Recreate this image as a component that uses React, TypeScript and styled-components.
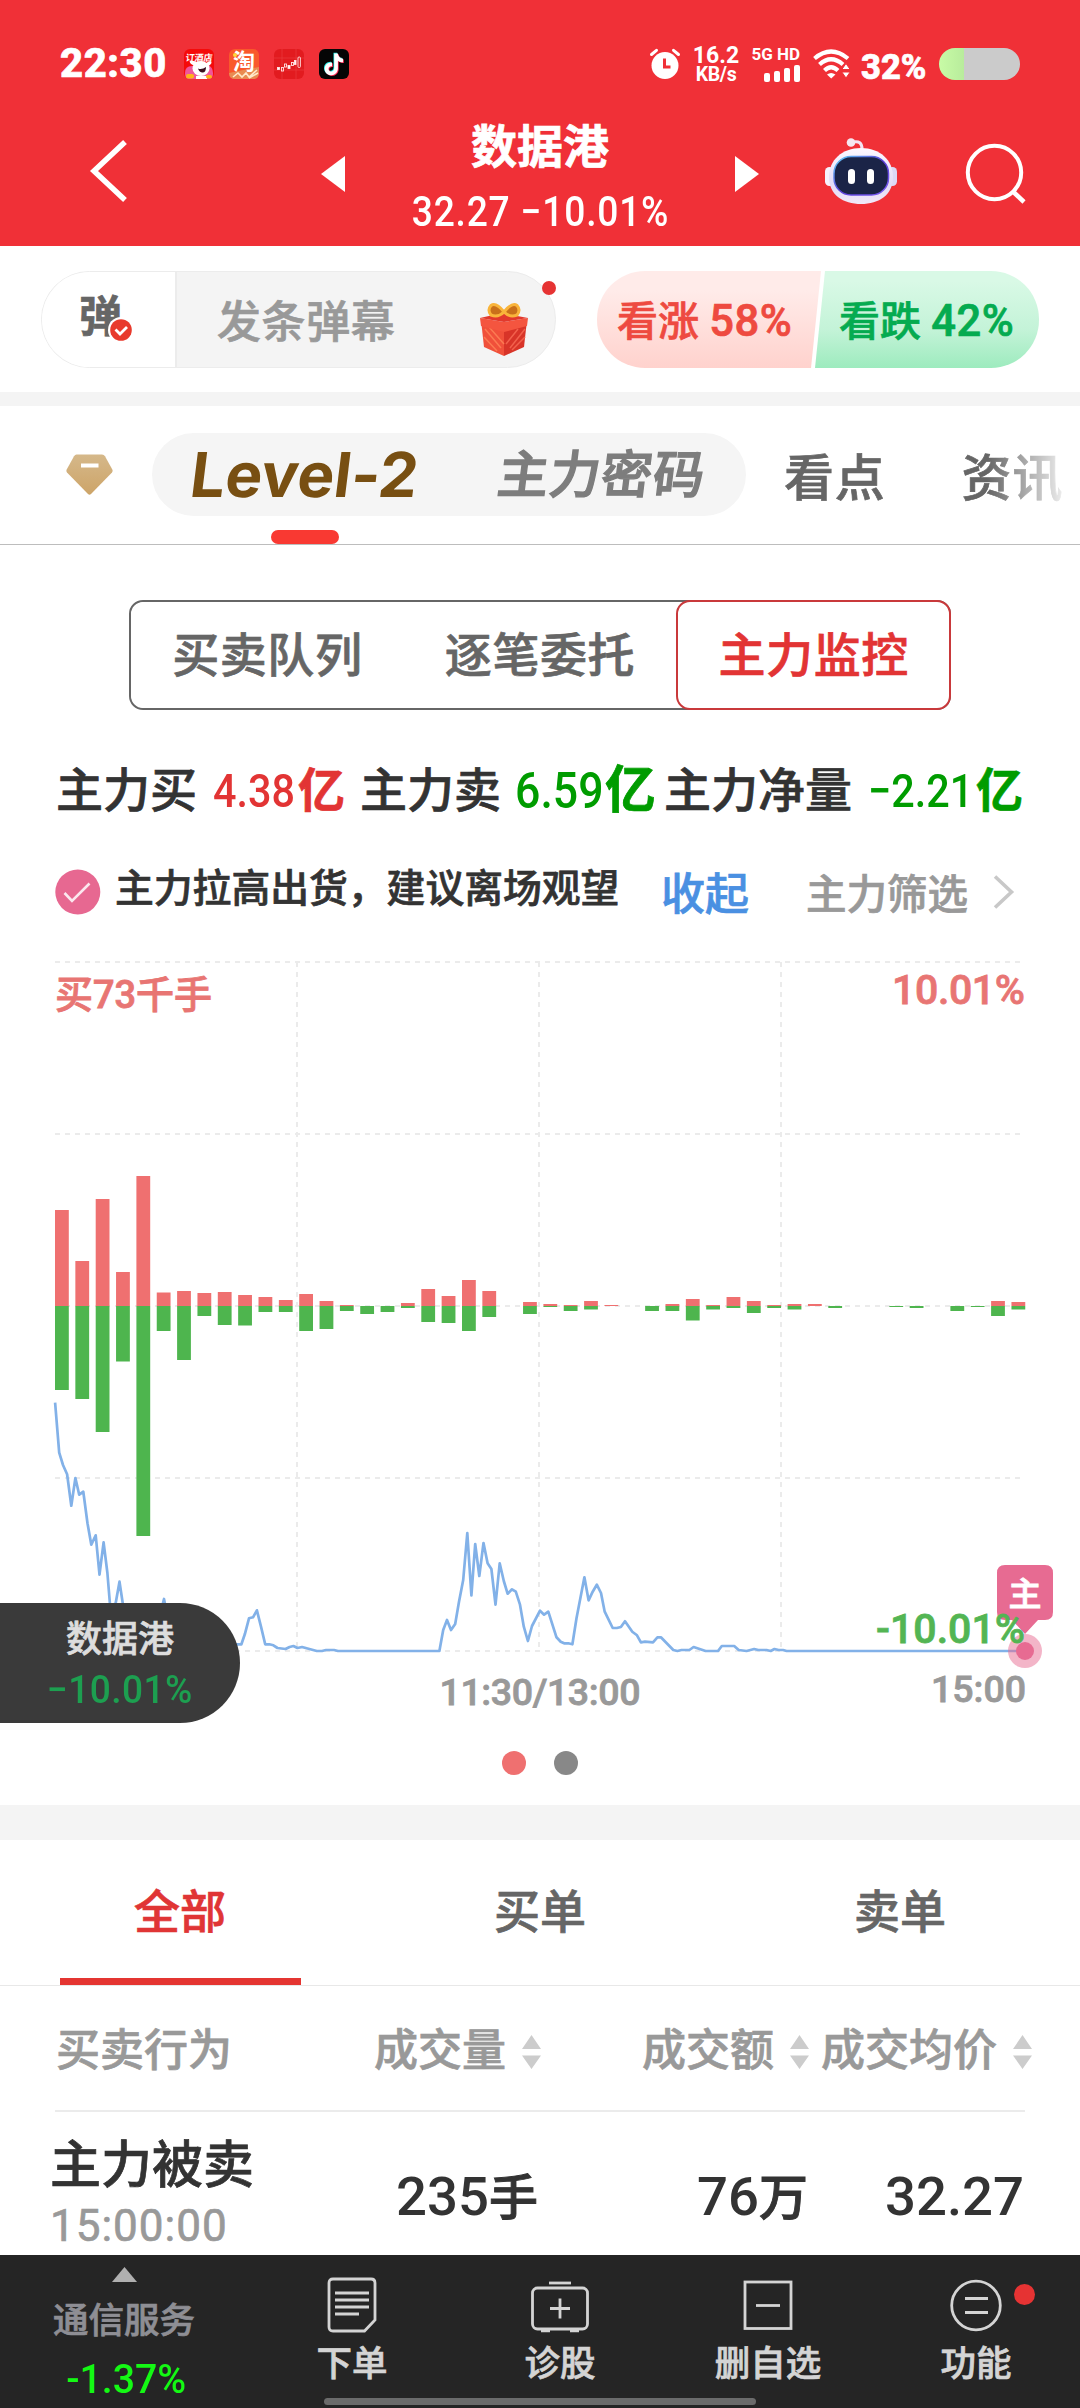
import React from "react";
import styled, { createGlobalStyle } from "styled-components";

const RED = "#f03037";
const INK = "#333333";

const GlobalStyle = createGlobalStyle`
  * { box-sizing: border-box; }
  html, body { margin: 0; padding: 0; background: #fff; }
  body {
    width: 1080px;
    font-family: Roboto, "Noto Sans CJK SC", sans-serif;
    font-weight: 500;
    color: ${INK};
    -webkit-text-stroke: 0.7px currentColor;
  }
  svg { display: block; flex: none; overflow: visible; }
  svg text { -webkit-text-stroke: 0; }
`;

const Page = styled.div`
  position: relative;
  width: 1080px;
  height: 2408px;
  overflow: hidden;
  background: #fff;
  display: flex;
  flex-direction: column;
`;

/* ---------- top bar ---------- */

const TopBar = styled.header`
  flex: none;
  height: 246px;
  background: ${RED};
  color: #fff;
`;

const StatusBar = styled.div`
  height: 96px;
  padding: 32px 60px 0 60px;
  display: flex;
  align-items: center;
`;

const Clock = styled.span`
  width: 124px;
  font-size: 40px;
  line-height: 64px;
  font-weight: 800;
  letter-spacing: 0.6px;
`;

const AppIcons = styled.div`
  display: flex;
  gap: 15px;
`;

const StatusRight = styled.div`
  flex: 1;
  display: flex;
  align-items: center;
  justify-content: flex-end;
`;

const NetSpeed = styled.div`
  width: 50px;
  margin-left: 11px;
  display: flex;
  flex-direction: column;
  align-items: center;
  font-weight: 700;
  -webkit-text-stroke: 0;
`;

const SpeedValue = styled.span`
  font-size: 23px;
  line-height: 21px;
`;

const SpeedUnit = styled.span`
  font-size: 19.5px;
  line-height: 18px;
  letter-spacing: -0.4px;
`;

const Signal = styled.div`
  width: 50px;
  margin-left: 9px;
  display: flex;
  flex-direction: column;
  align-items: flex-end;
  -webkit-text-stroke: 0;
`;

const SignalLabel = styled.span`
  font-size: 17px;
  line-height: 14px;
  font-weight: 700;
  white-space: nowrap;
`;

const SignalBars = styled.div`
  display: flex;
  align-items: flex-end;
  gap: 4px;
  height: 17px;
  margin-top: 4px;
`;

const SignalBar = styled.i<{ $h: number }>`
  width: 6px;
  height: ${(p) => p.$h}px;
  border-radius: 2px;
  background: #fff;
`;

const BatteryText = styled.span`
  width: 78px;
  margin-left: 11px;
  font-size: 34.5px;
  line-height: 40px;
  padding-top: 5px;
  font-weight: 800;
`;

const Battery = styled.div`
  width: 81px;
  height: 32px;
  border-radius: 16px;
  background: linear-gradient(90deg, #c8fba6 0, #b8ec9c 25px, #cbcbcb 25px);
`;

const NavRow = styled.div`
  height: 150px;
  padding-left: 90px;
  display: flex;
  align-items: center;
`;

const Push = styled.div<{ $left: number; $top?: number }>`
  margin-left: ${(p) => p.$left}px;
  padding-top: ${(p) => p.$top ?? 0}px;
`;

const TitleBlock = styled.div`
  width: 390px;
  height: 150px;
  padding-top: 24px;
  display: flex;
  flex-direction: column;
  align-items: center;
`;

const StockName = styled.h1`
  margin: 0;
  font-size: 46px;
  line-height: 54px;
  font-weight: 700;
`;

const StockPrice = styled.div`
  margin-top: 11px;
  font-size: 42px;
  line-height: 54px;
  white-space: pre;
  transform: scaleX(0.885);
  letter-spacing: 0.9px;
  -webkit-text-stroke: 0;
`;

/* ---------- comments / votes ---------- */

const DanmuRow = styled.div`
  flex: none;
  height: 146px;
  padding: 25px 41px 0;
  display: flex;
  justify-content: space-between;
`;

const DanmuPill = styled.div`
  position: relative;
  width: 515px;
  height: 97px;
  border: 1px solid #ececec;
  border-radius: 49px;
  display: flex;
  background: #f4f4f4;
`;

const DanmuToggle = styled.div`
  position: relative;
  width: 135px;
  border-right: 2px solid #ececec;
  border-radius: 48px 0 0 48px;
  background: #fff;
  padding-left: 37px;
  font-size: 43px;
  line-height: 90px;
  font-weight: 700;
  color: #666;
`;

const ToggleBadge = styled.div`
  position: absolute;
  left: 66px;
  top: 45px;
`;

const DanmuInput = styled.div`
  flex: 1;
  padding-left: 40px;
  font-size: 44px;
  line-height: 102px;
  letter-spacing: 0.6px;
  color: #999;
`;

const GiftSlot = styled.div`
  padding: 30px 27px 0 0;
`;

const RedDot = styled.i<{ $size: number; $left: number; $top: number }>`
  position: absolute;
  left: ${(p) => p.$left}px;
  top: ${(p) => p.$top}px;
  width: ${(p) => p.$size}px;
  height: ${(p) => p.$size}px;
  border-radius: 50%;
  background: #e63333;
`;

const Votes = styled.div`
  display: flex;
  width: 442px;
`;

const Vote = styled.div<{ $up?: boolean }>`
  flex: none;
  width: 224px;
  height: 97px;
  margin-left: ${(p) => (p.$up ? 0 : -6)}px;
  padding-left: ${(p) => (p.$up ? 20 : 24)}px;
  border-radius: ${(p) => (p.$up ? "48px 0 0 48px" : "0 48px 48px 0")};
  background: ${(p) =>
    p.$up
      ? "linear-gradient(180deg,#ffebe9 20%,#ffd2cd)"
      : "linear-gradient(180deg,#d9f9e6 10%,#c4f3d8 60%,#9debbe)"};
  color: ${(p) => (p.$up ? "#ee4a40" : "#05ab50")};
  clip-path: ${(p) =>
    p.$up
      ? "polygon(0 0,100% 0,calc(100% - 10px) 100%,0 100%)"
      : "polygon(10px 0,100% 0,100% 100%,0 100%)"};
  font-size: 41px;
  line-height: 101px;
  white-space: nowrap;
  & > span {
    font-size: 43.5px;
    letter-spacing: 0.6px;
  }
`;

const Band = styled.div<{ $h: number }>`
  flex: none;
  height: ${(p) => p.$h}px;
  background: #f4f4f4;
`;

/* ---------- main tabs ---------- */

const MainTabs = styled.nav`
  position: relative;
  flex: none;
  height: 139px;
  border-bottom: 1px solid #bdbdbd;
  display: flex;
  padding-top: 27px;
`;

const DiamondSlot = styled.div`
  width: 152px;
  padding: 21px 0 0 66px;
`;

const TabPill = styled.div`
  width: 594px;
  height: 83px;
  border-radius: 42px;
  background: #f5f5f5;
  display: flex;
`;

const LevelTab = styled.span`
  width: 346px;
  padding-left: 39px;
  font-family: Inter, Roboto, sans-serif;
  font-size: 62px;
  line-height: 83px;
  font-weight: 700;
  letter-spacing: 0;
  color: #784f12;
  transform: skewX(-7deg);
  -webkit-text-stroke: 0;
`;

const SecretTab = styled.span`
  font-size: 51px;
  line-height: 85px;
  letter-spacing: 0.8px;
  color: #7d7d7d;
  transform: skewX(-7deg);
  -webkit-text-stroke: 1.4px currentColor;
`;

const PlainTab = styled.span<{ $left: number; $fade?: boolean }>`
  margin-left: ${(p) => p.$left}px;
  font-size: 50px;
  line-height: 92px;
  color: #666;
  letter-spacing: 0.8px;
  white-space: nowrap;
  ${(p) =>
    p.$fade &&
    "mask-image: linear-gradient(90deg,#000 25%,rgba(0,0,0,.12) 100%);"}
`;

const TabMark = styled.i`
  position: absolute;
  left: 271px;
  bottom: 0;
  width: 68px;
  height: 14px;
  border-radius: 7px;
  background: #f93932;
`;

/* ---------- segmented control ---------- */

const Segments = styled.div`
  flex: none;
  margin: 55px 129px 0 129px;
  height: 110px;
  border: 2px solid #666;
  border-radius: 14px;
  display: grid;
  grid-template-columns: 1fr 1fr 1fr;
  grid-template-rows: 106px;
`;

const Segment = styled.div<{ $on?: boolean }>`
  margin: ${(p) => (p.$on ? "-2px -2px -2px 0" : "0")};
  border: ${(p) => (p.$on ? "2px solid #c9393b" : "0")};
  border-radius: 14px;
  background: #fff;
  text-align: center;
  font-size: 47px;
  line-height: 108px;
  letter-spacing: 0.6px;
  color: ${(p) => (p.$on ? "#e23434" : "#666")};
`;

/* ---------- totals ---------- */

const Totals = styled.div`
  flex: none;
  height: 64px;
  margin-top: 47px;
  padding-left: 56px;
  display: grid;
  grid-template-columns: 304px 304px 360px;
`;

const Total = styled.div<{ $color: string }>`
  display: flex;
  font-size: 47px;
  line-height: 68px;
  white-space: nowrap;
  & > b {
    font-weight: 500;
    color: ${(p) => p.$color};
  }
`;

const TotalLabel = styled.span<{ $w: number }>`
  width: ${(p) => p.$w}px;
`;

const TotalValue = styled.b<{ $w: number; $grow?: number }>`
  width: ${(p) => p.$w}px;
  font-size: ${(p) => 47 * (p.$grow ?? 1)}px;
  transform: scaleX(0.88);
  transform-origin: left;
  -webkit-text-stroke: 0;
`;

const TotalUnit = styled.b<{ $grow?: number }>`
  && { font-weight: 700; }
  font-size: ${(p) => 47 * (p.$grow ?? 1)}px;
`;

/* ---------- hint ---------- */

const Hint = styled.div`
  flex: none;
  height: 60px;
  margin-top: 41px;
  padding-left: 55px;
  display: flex;
  align-items: center;
  white-space: nowrap;
`;

const HintText = styled.span`
  width: 560px;
  padding-left: 14px;
  font-size: 38.8px;
  line-height: 60px;
  margin-top: -6px;
`;

const Collapse = styled.span`
  width: 145px;
  font-size: 44px;
  line-height: 64px;
  padding-top: 6px;
  color: #4a90e2;
`;

const FilterLink = styled.span`
  width: 187px;
  font-size: 40.5px;
  line-height: 64px;
  padding-top: 5px;
  color: #999;
`;

/* ---------- chart ---------- */

const ChartBox = styled.div`
  flex: none;
  height: 790px;
  margin-top: 28px;
`;

const ChartLabel = styled.text<{ $size: number; $color: string }>`
  font-size: ${(p) => p.$size}px;
  fill: ${(p) => p.$color};
  stroke: ${(p) => p.$color};
  stroke-width: 0.8px;
  font-weight: 500;
`;

const Pager = styled.div`
  flex: none;
  height: 65px;
  display: flex;
  justify-content: center;
  gap: 28px;
  padding: 11px 0 0 0;
`;

const PagerDot = styled.i<{ $color: string }>`
  width: 24px;
  height: 24px;
  border-radius: 50%;
  background: ${(p) => p.$color};
`;

const FloatQuote = styled.aside`
  position: absolute;
  left: 0;
  top: 1603px;
  width: 240px;
  height: 120px;
  padding: 12px 0 0 0;
  border-radius: 0 60px 60px 0;
  background: #3a3a3a;
  display: flex;
  flex-direction: column;
  align-items: center;
`;

const FloatName = styled.span`
  font-size: 36px;
  line-height: 50px;
  color: #ddd;
`;

const FloatChange = styled.span`
  font-size: 39px;
  line-height: 50px;
  color: #1d9f50;
  transform: scaleX(0.95);
  letter-spacing: 0.5px;
  -webkit-text-stroke: 0;
`;

/* ---------- orders ---------- */

const OrderTabs = styled.div`
  flex: none;
  height: 146px;
  border-bottom: 1px solid #e8e8e8;
  display: grid;
  grid-template-columns: repeat(3, 360px);
`;

const OrderTab = styled.div<{ $on?: boolean }>`
  display: flex;
  flex-direction: column;
  align-items: center;
  font-size: 46px;
  line-height: 145px;
  height: 145px;
  color: ${(p) => (p.$on ? "#e03535" : "#666")};
  &::after {
    content: "";
    flex: none;
    width: 241px;
    height: 7px;
    margin-top: -7px;
    background: ${(p) => (p.$on ? "#e43531" : "transparent")};
  }
`;

const gridCols = "286px 200px 268px 223px";

const HeadRow = styled.div`
  flex: none;
  height: 126px;
  margin: 0 55px;
  border-bottom: 2px solid #ebebeb;
  display: grid;
  grid-template-columns: ${gridCols};
  font-size: 44px;
  line-height: 131px;
  color: #999;
  white-space: nowrap;
`;

const HeadCell = styled.div<{ $first?: boolean }>`
  display: flex;
  align-items: center;
  justify-content: ${(p) => (p.$first ? "flex-start" : "flex-end")};
  gap: 16px;
  padding-left: ${(p) => (p.$first ? 1 : 0)}px;
`;

const DataRow = styled.div`
  flex: none;
  height: 142px;
  padding-left: 50px;
  display: grid;
  grid-template-columns: 291px 197px 270px 216px;
`;

const Action = styled.div`
  display: flex;
  flex-direction: column;
  padding-top: 22px;
`;

const ActionName = styled.span`
  font-size: 51px;
  line-height: 64px;
`;

const ActionTime = styled.span`
  font-size: 44px;
  line-height: 56px;
  font-weight: 400;
  letter-spacing: 1px;
  color: #999;
`;

const Cell = styled.div`
  text-align: right;
  font-size: 54.5px;
  line-height: 168px;
  -webkit-text-stroke: 0;
  & > span {
    font-size: 49px;
    -webkit-text-stroke: 0.9px currentColor;
  }
`;

/* ---------- bottom bar ---------- */

const BottomBar = styled.footer`
  position: absolute;
  left: 0;
  bottom: 0;
  width: 1080px;
  height: 153px;
  background: #252525;
  display: grid;
  grid-template-columns: 248px repeat(4, 208px);
  color: #d4d4d4;
`;

const Sector = styled.div`
  display: flex;
  flex-direction: column;
  align-items: center;
  padding-top: 12px;
`;

const SectorName = styled.span`
  margin-top: 13px;
  font-size: 35.5px;
  line-height: 52px;
  color: #8e8e94;
`;

const SectorChange = styled.span`
  margin: 7px 0 0 4px;
  font-size: 40px;
  line-height: 52px;
  color: #14f814;
  transform: scaleX(0.98);
  -webkit-text-stroke: 0;
`;

const NavAction = styled.div`
  position: relative;
  display: flex;
  flex-direction: column;
  align-items: center;
  padding-top: 21px;
`;

const ActionLabel = styled.span`
  margin-top: 6px;
  font-size: 35.5px;
  line-height: 52px;
`;

const HomeBar = styled.i`
  position: absolute;
  left: 324px;
  bottom: 3px;
  width: 432px;
  height: 7px;
  border-radius: 4px;
  background: #6b6b6b;
`;

/* ---------- data ---------- */

const bars: [number, number][] = [
  [96, 84], [45, 93], [107, 126], [34, 55.5], [130, 230], [13.5, 25], [15, 54],
  [13, 10], [14, 19], [11, 19.5], [9, 6], [6, 6], [12, 25], [5, 23], [1, 5],
  [0, 8], [0, 6], [3, 2], [17, 16], [10, 17], [26, 25], [15, 11], [0, 0],
  [4, 8], [2, 1], [1, 5], [5, 3.5], [1, 0], [0, 0], [0, 5], [2, 5], [7, 14.5],
  [1, 3.5], [9, 2], [5, 7], [1, 2], [2, 3.5], [2, 0], [0, 2], [0, 0], [0, 0],
  [0, 1], [0, 2], [0, 0], [0, 5], [0, 1], [5, 10], [4, 3.5],
];

const trend =
  "55.1,1402.7 59.2,1452.7 63,1465 67.1,1474.3 71.3,1505.7 75.4,1478 79.2,1494.7 83.3,1491.7 87.5,1523.3 91.3,1544.7 95.7,1535.3 99.5,1574.7 103.6,1542.3 107.4,1573 110.2,1607 115.7,1603 119.5,1581.7 123.3,1607 131,1640 155,1640 160,1615 164,1599 168,1620 174,1644 237.6,1644.3 241.4,1644.3 244.8,1634.3 249,1618.3 253,1617.3 256.9,1610.3 261,1626.7 265.2,1644.3 269.3,1644.3 273.4,1645.3 277.5,1648 285.5,1649 289.6,1647 293.4,1646 297.5,1648 302,1647 316.8,1651 322,1651 326,1650 334,1650 338,1651 439.4,1651 443.2,1630 447,1620 451,1630 455.2,1624 459,1601.7 463.2,1580 467.3,1533 471.4,1595.3 475.2,1544 479.3,1576 483.5,1543 487.6,1563.3 491.4,1569 495.5,1604.7 499.7,1563.3 503.8,1581 507.6,1593.7 512,1589.3 515.8,1591.7 520,1604.7 523.8,1626.7 527.9,1641 532,1626 540,1610.7 544.1,1614.7 548.3,1611.7 556.5,1637.3 560.7,1641.7 564.1,1643.3 568.2,1643.3 572.4,1644.3 576.5,1618.3 584.4,1577.3 588.6,1600.3 592.7,1591.7 596.8,1584.7 601,1593 604.7,1611.7 612.7,1628 616.8,1628 620.9,1627 625,1621.3 632.3,1631.7 637,1635.3 640.9,1642.3 645,1641.7 653,1642.3 657.4,1637.3 660.9,1637.3 673.3,1650 677.4,1651 681.5,1650 689.4,1650 693.6,1647 705.6,1651 718,1651 721.8,1646 734.2,1646 738.7,1650 746.6,1651 754.2,1649 758.3,1650 766.6,1650 770.7,1651 774.5,1649 778.6,1650 783,1650 786.6,1651 1024.8,1651";

/* ---------- drawings ---------- */

const HotelIcon = () => (
  <svg width="30" height="30" viewBox="0 0 30 30">
    <rect width="30" height="30" rx="6" fill="#f50a0a" />
    <path d="M1 24 Q1 17 8 17 L22 14 Q29 18 29 24 V25 Q29 30 24 30 H6 Q1 30 1 25Z" fill="#f0569a" />
    <text x="15" y="12.5" fontSize="9" fontWeight="700" fill="#fff" textAnchor="middle" transform="skewX(-6) translate(1 0)">订酒店</text>
    <ellipse cx="17" cy="19.5" rx="8.5" ry="7.5" fill="#fff" />
    <ellipse cx="11" cy="14.5" rx="5.5" ry="2.2" fill="#fff" transform="rotate(20 11 14.5)" />
    <ellipse cx="24" cy="15" rx="4" ry="1.8" fill="#fff" transform="rotate(-35 24 15)" />
    <path d="M14 19.5 Q18 21 22 18 Q22 24 18 23.5 Q15 23 14 19.5Z" fill="#3a1020" />
    <path d="M12 27 h11 v3 h-11z" fill="#fff" />
    <rect x="2" y="25" width="8" height="4.5" rx="2" fill="#ffb31a" />
    <rect x="22" y="26" width="6" height="3.5" rx="1.7" fill="#ffb31a" />
  </svg>
);

const TaoIcon = () => (
  <svg width="30" height="30" viewBox="0 0 30 30">
    <rect width="30" height="30" rx="6" fill="#f9592b" />
    <path d="M0 24 Q14 21 30 18 V24 Q30 30 24 30 H6 Q0 30 0 24Z" fill="#e98b52" />
    <path d="M4 28 l5 -4 l4 4 l4 -4 l3 4 l8 -7 M20 29 l9 -5" stroke="#ffe9c9" strokeWidth="1.6" fill="none" />
    <text x="15" y="20" fontSize="22" fontWeight="700" fill="#fff" textAnchor="middle">淘</text>
    <circle cx="6" cy="6" r="2" fill="#ffd93b" />
  </svg>
);

const StockIcon = () => (
  <svg width="30" height="30" viewBox="0 0 30 30">
    <rect width="30" height="30" rx="6" fill="#e21b1f" />
    <path d="M8 0V30 M22 0V30 M0 9H30 M0 21H30" stroke="#ea3a3c" strokeWidth="0.7" />
    <g fill="none" stroke="#ffe3e3" strokeWidth="0.9">
      <rect x="3.5" y="18.5" width="2" height="2" fill="#fff" />
      <rect x="7.5" y="18.5" width="2" height="3.5" />
      <rect x="10.5" y="15" width="2" height="3" />
      <rect x="14" y="16.5" width="2" height="3" fill="#fff" />
      <rect x="17.5" y="13.5" width="2" height="3" />
      <rect x="20.5" y="11.5" width="1.5" height="4" fill="#fff" />
      <rect x="24" y="8" width="2.4" height="10.5" rx="1" />
    </g>
  </svg>
);

const TiktokIcon = () => {
  const note =
    "M15.2 4.5h3.6c.4 3 2.2 4.9 5.2 5.2v3.6c-2 0-3.7-.6-5.1-1.6v7.6c0 4-2.9 6.9-6.7 6.9-3.7 0-6.5-2.8-6.5-6.3 0-3.8 3.2-6.7 7.3-6.3v3.7c-2.1-.3-3.5.9-3.5 2.6 0 1.5 1.2 2.6 2.700 2.600 1.800 0 3-1.200 3-3.200z";
  return (
    <svg width="30" height="30" viewBox="0 0 30 30">
      <rect width="30" height="30" rx="6" fill="#050505" />
      <path d={note} fill="#2af0ea" transform="translate(-.7 -.7)" />
      <path d={note} fill="#fe2c55" transform="translate(.8 .7)" />
      <path d={note} fill="#fff" />
    </svg>
  );
};

const AlarmIcon = () => (
  <svg width="30" height="30" viewBox="0 0 30 30">
    <circle cx="15" cy="16.5" r="13.5" fill="#fff" />
    <path d="M1.5 5.5 L6.5 1.3 M28.5 5.5 L23.5 1.3" stroke="#fff" strokeWidth="3" strokeLinecap="round" />
    <path d="M14.5 9.5 V18 H20.5" stroke={RED} strokeWidth="3" fill="none" />
  </svg>
);

const WifiIcon = () => (
  <svg width="37" height="30" viewBox="0 0 37 30">
    <g fill="none" stroke="#fff" strokeWidth="4.2">
      <path d="M1.5 9.5 Q18 -4.5 35 9.5" />
      <path d="M6.5 15.5 Q18 5 30 15.5" />
      <path d="M11.5 21.500 Q18 15 25 21.500" />
    </g>
    <path d="M14 25.500 Q18 22.500 22.500 25.500 L18.200 29.500Z" fill="#fff" />
    <path d="M33 14.500 l4.200 6 h-8.400z M33 29 l4.200 -6 h-8.400z" fill="#fff" stroke={RED} strokeWidth="1" />
  </svg>
);

const BackIcon = () => (
  <svg width="38" height="64" viewBox="0 0 38 64">
    <path d="M35 3 L4 32 L35 61" stroke="#fff" strokeWidth="5.500" fill="none" />
  </svg>
);

const Tri = ({ flip }: { flip?: boolean }) => (
  <svg width="24" height="36" viewBox="0 0 24 36">
    <path d={flip ? "M0 0 L24 18 L0 36Z" : "M24 0 L0 18 L24 36Z"} fill="#fff" />
  </svg>
);

const Robot = () => (
  <svg width="72" height="66" viewBox="0 0 72 66">
    <defs>
      <linearGradient id="rbHead" x1="0" y1="0" x2="0" y2="1">
        <stop offset="0" stopColor="#fdf8ff" />
        <stop offset=".65" stopColor="#e3dbf6" />
        <stop offset="1" stopColor="#f1e8f8" />
      </linearGradient>
      <linearGradient id="rbRim" x1="0" y1="0" x2="1" y2="1">
        <stop offset="0" stopColor="#5fd0f5" />
        <stop offset=".5" stopColor="#5a3fd8" />
        <stop offset="1" stopColor="#7a5cf0" />
      </linearGradient>
    </defs>
    <path d="M28 4 Q37 2 37 11" stroke="#f3e4f3" strokeWidth="3" fill="none" />
    <circle cx="26" cy="4.500" r="4.300" fill="#f6e6f0" />
    <rect x="0" y="29" width="9" height="19" rx="4.500" fill="#f6f2fd" />
    <rect x="63" y="29" width="9" height="19" rx="4.500" fill="#dcd8f6" />
    <path d="M36 10 C55 10 68 22 68 39 C68 57 54 66 36 66 C18 66 4 57 4 39 C4 22 17 10 36 10Z" fill="url(#rbHead)" />
    <rect x="9" y="18.500" width="54.500" height="38.500" rx="17" fill="#1b2447" stroke="url(#rbRim)" strokeWidth="1.500" />
    <rect x="23" y="31" width="7" height="15" rx="3.500" fill="#fff" />
    <rect x="42" y="31" width="7" height="15" rx="3.500" fill="#fff" />
  </svg>
);

const SearchIcon = () => (
  <svg width="62" height="60" viewBox="0 0 62 60">
    <circle cx="29.500" cy="29.500" r="26.700" stroke="#fff" strokeWidth="4" fill="none" />
    <path d="M48 48.500 L59 59" stroke="#fff" strokeWidth="4.500" />
  </svg>
);

const CheckBadge = () => (
  <svg width="26" height="26" viewBox="0 0 26 26">
    <circle cx="13" cy="13" r="13" fill="#fff" />
    <circle cx="13" cy="13" r="10.800" fill="#e83a2c" />
    <path d="M7.500 12.500 L12 17 L19 10" stroke="#fff" strokeWidth="2.800" fill="none" />
  </svg>
);

const Gift = () => (
  <svg width="48" height="54" viewBox="0 0 48 54">
    <path d="M1 18 L24 25 V54 L4 45Z" fill="#f0503a" />
    <path d="M47 18 L24 25 V54 L44 45Z" fill="#d83428" />
    <path d="M5 27 L21 46 M4 35 L17 49 M9 25 L24 42" stroke="#fb7a52" strokeWidth="1.500" />
    <path d="M45 27 L30 46 M45 35 L32 48 M38 27 L26 42" stroke="#f2604c" strokeWidth="1.500" />
    <path d="M0 16 L24 20 L48 16 L47 24 L24 30 L1 24Z" fill="#f4553f" />
    <path d="M0 16 L22 11 L48 16 L24 20Z" fill="#e2392c" />
    <g fill="none" stroke="#f9b43a" strokeWidth="3">
      <path d="M24 10 Q16 0 11 3.500 Q7 8 11 13 Q18 16 24 10Z" fill="#c9701a" />
      <path d="M24 10 Q32 0 37 3.500 Q41 8 37 13 Q30 16 24 10Z" fill="#c9701a" />
    </g>
  </svg>
);

const Diamond = () => (
  <svg width="47" height="42" viewBox="0 0 47 42">
    <defs>
      <linearGradient id="dm" x1="0" y1="0" x2="0" y2="1">
        <stop offset="0" stopColor="#d5b88a" />
        <stop offset="1" stopColor="#cda468" />
      </linearGradient>
    </defs>
    <path d="M10.500 0.500 H36 Q38 .5 39 2.300 L46.300 15.500 Q47.200 17.200 46 18.600 L25 40 Q23.500 41.500 22 40 L1 18.600 Q-.2 17.200 .7 15.500 L8 2.300 Q9 .5 10.500 .5Z" fill="url(#dm)" />
    <rect x="15" y="9.500" width="17.500" height="4" fill="#fff" />
  </svg>
);

const HintIcon = () => (
  <svg width="46" height="46" viewBox="0 0 46 46">
    <circle cx="22.800" cy="23" r="22.500" fill="#e76891" />
    <path d="M9.500 24 L17 32 L34.500 14.500" stroke="#fbe8ef" strokeWidth="2.600" fill="none" />
  </svg>
);

const ChevronIcon = () => (
  <svg width="22" height="34" viewBox="0 0 22 34">
    <path d="M2 1.500 L18.500 17 L2 32.500" stroke="#c8c8c8" strokeWidth="3.600" fill="none" />
  </svg>
);

const SortIcon = () => (
  <svg width="19" height="34" viewBox="0 0 19 34">
    <path d="M9.500 0 L19 14 H0Z M9.500 34 L19 20.500 H0Z" fill="#ccc" />
  </svg>
);

const DocIcon = () => (
  <svg width="52" height="56" viewBox="0 0 52 56" fill="none" stroke="#d4d4d4">
    <path d="M7 3 H45 Q49 3 49 7 V44 L38.500 55 H7 Q3 55 3 51 V7 Q3 3 7 3Z" strokeWidth="2.800" />
    <path d="M9 17 H43 M9 24 H43 M9 31 H43 M9 38 H33" strokeWidth="2.800" />
  </svg>
);

const CaseIcon = () => (
  <svg width="58" height="56" viewBox="0 0 58 56" fill="none" stroke="#d4d4d4" strokeWidth="2.800">
    <rect x="1.500" y="12" width="55" height="41" rx="5" />
    <path d="M18 7 H40" />
    <path d="M10 54.500 H19 M39 54.500 H48" strokeWidth="3.500" />
    <path d="M29 22.500 V42.500 M19 32.500 H39" />
  </svg>
);

const RemoveIcon = () => (
  <svg width="50" height="56" viewBox="0 0 50 56" fill="none" stroke="#d4d4d4" strokeWidth="2.800">
    <rect x="2" y="6" width="46" height="46.500" />
    <path d="M13 29.500 H37" />
  </svg>
);

const FuncIcon = () => (
  <svg width="52" height="56" viewBox="0 0 52 56" fill="none" stroke="#d4d4d4" strokeWidth="2.800">
    <circle cx="26" cy="29.500" r="24.300" />
    <path d="M15 22.500 H38 M15 36.500 H38" />
  </svg>
);

const STEP = 20.35;
const MID = 1306;

const Chart = () => (
  <svg width="1080" height="790" viewBox="0 950 1080 790">
    <g stroke="#ebebeb" strokeWidth="2" strokeDasharray="5 5">
      {[962, 1134, 1306, 1478, 1651].map((y) => (
        <path key={y} d={`M55 ${y}H1021`} />
      ))}
      {[297, 539, 781].map((x) => (
        <path key={x} d={`M${x} 962V1651`} />
      ))}
    </g>
    {bars.map(([up, down], i) => (
      <g key={i}>
        <rect x={55 + i * STEP} y={MID - up} width="13.800" height={up} fill="#ef7070" />
        <rect x={55 + i * STEP} y={MID} width="13.800" height={down} fill="#4eb54e" />
      </g>
    ))}
    <polyline points={trend} fill="none" stroke="#82b1e8" strokeWidth="2.700" strokeLinejoin="round" />
    <path d="M1005 1565 H1045 Q1053 1565 1053 1573 V1612 Q1053 1620 1045 1620 H1038 L1025 1634 L1012 1620 H1005 Q997 1620 997 1612 V1573 Q997 1565 1005 1565Z" fill="#e76b92" />
    <ChartLabel $size={33} $color="#fff" x="1025" y="1605.500" textAnchor="middle">主</ChartLabel>
    <circle cx="1025" cy="1651" r="17" fill="#e76b92" fillOpacity=".5" />
    <circle cx="1025" cy="1651" r="9" fill="#e76b92" />
    <ChartLabel $size={38} $color="#e87573" x="55" y="1008" textLength="157">买73千手</ChartLabel>
    <ChartLabel $size={41} $color="#e87573" x="1025" y="1004" textAnchor="end" textLength="133">10.01%</ChartLabel>
    <ChartLabel $size={41} $color="#53b553" x="1025" y="1643" textAnchor="end" textLength="149">-10.01%</ChartLabel>
    <ChartLabel $size={37.5} $color="#999" x="540" y="1704.500" textAnchor="middle" textLength="201">11:30/13:00</ChartLabel>
    <ChartLabel $size={37.5} $color="#999" x="1026" y="1701.500" textAnchor="end" textLength="95">15:00</ChartLabel>
  </svg>
);

const heads = ["成交量", "成交额", "成交均价"];

export default function App() {
  return (
    <Page>
      <GlobalStyle />
      <TopBar>
        <StatusBar>
          <Clock>22:30</Clock>
          <AppIcons>
            <HotelIcon />
            <TaoIcon />
            <StockIcon />
            <TiktokIcon />
          </AppIcons>
          <StatusRight>
            <AlarmIcon />
            <NetSpeed>
              <SpeedValue>16.2</SpeedValue>
              <SpeedUnit>KB/s</SpeedUnit>
            </NetSpeed>
            <Signal>
              <SignalLabel>5G HD</SignalLabel>
              <SignalBars>
                {[9, 11, 14, 17].map((h) => (
                  <SignalBar key={h} $h={h} />
                ))}
              </SignalBars>
            </Signal>
            <Push $left={13}>
              <WifiIcon />
            </Push>
            <BatteryText>32%</BatteryText>
            <Battery />
          </StatusRight>
        </StatusBar>
        <NavRow>
          <BackIcon />
          <Push $left={193} $top={6}>
            <Tri />
          </Push>
          <TitleBlock>
            <StockName>数据港</StockName>
            <StockPrice>32.27 −10.01%</StockPrice>
          </TitleBlock>
          <Push $left={0} $top={6}>
            <Tri flip />
          </Push>
          <Push $left={66}>
            <Robot />
          </Push>
          <Push $left={68} $top={4}>
            <SearchIcon />
          </Push>
        </NavRow>
      </TopBar>

      <DanmuRow>
        <DanmuPill>
          <DanmuToggle>
            弹
            <ToggleBadge>
              <CheckBadge />
            </ToggleBadge>
          </DanmuToggle>
          <DanmuInput>发条弹幕</DanmuInput>
          <GiftSlot>
            <Gift />
          </GiftSlot>
          <RedDot $size={14} $left={500} $top={9} />
        </DanmuPill>
        <Votes>
          <Vote $up>
            看涨 <span>58%</span>
          </Vote>
          <Vote>
            看跌 <span>42%</span>
          </Vote>
        </Votes>
      </DanmuRow>
      <Band $h={14} />

      <MainTabs>
        <DiamondSlot>
          <Diamond />
        </DiamondSlot>
        <TabPill>
          <LevelTab>Level-2</LevelTab>
          <SecretTab>主力密码</SecretTab>
        </TabPill>
        <PlainTab $left={38}>看点</PlainTab>
        <PlainTab $left={76} $fade>
          资讯
        </PlainTab>
        <TabMark />
      </MainTabs>

      <Segments>
        <Segment>买卖队列</Segment>
        <Segment>逐笔委托</Segment>
        <Segment $on>主力监控</Segment>
      </Segments>

      <Totals>
        <Total $color="#e23434">
          <TotalLabel $w={157}>主力买</TotalLabel>
          <TotalValue $w={85}>4.38</TotalValue>
          <TotalUnit>亿</TotalUnit>
        </Total>
        <Total $color="#009c00">
          <TotalLabel $w={155}>主力卖</TotalLabel>
          <TotalValue $w={90} $grow={1.08}>6.59</TotalValue>
          <TotalUnit $grow={1.08}>亿</TotalUnit>
        </Total>
        <Total $color="#009c00">
          <TotalLabel $w={204}>主力净量</TotalLabel>
          <TotalValue $w={108}>−2.21</TotalValue>
          <TotalUnit>亿</TotalUnit>
        </Total>
      </Totals>

      <Hint>
        <HintIcon />
        <HintText>主力拉高出货，建议离场观望</HintText>
        <Collapse>收起</Collapse>
        <FilterLink>主力筛选</FilterLink>
        <ChevronIcon />
      </Hint>

      <ChartBox>
        <Chart />
      </ChartBox>
      <Pager>
        <PagerDot $color="#ef7070" />
        <PagerDot $color="#888" />
      </Pager>
      <Band $h={35} />

      <OrderTabs>
        <OrderTab $on>全部</OrderTab>
        <OrderTab>买单</OrderTab>
        <OrderTab>卖单</OrderTab>
      </OrderTabs>
      <HeadRow>
        <HeadCell $first>买卖行为</HeadCell>
        {heads.map((h) => (
          <HeadCell key={h}>
            {h}
            <SortIcon />
          </HeadCell>
        ))}
      </HeadRow>
      <DataRow>
        <Action>
          <ActionName>主力被卖</ActionName>
          <ActionTime>15:00:00</ActionTime>
        </Action>
        <Cell>
          235<span>手</span>
        </Cell>
        <Cell>
          76<span>万</span>
        </Cell>
        <Cell>32.27</Cell>
      </DataRow>

      <FloatQuote>
        <FloatName>数据港</FloatName>
        <FloatChange>−10.01%</FloatChange>
      </FloatQuote>

      <BottomBar>
        <Sector>
          <svg width="25" height="15" viewBox="0 0 25 15">
            <path d="M12.500 0 L25 15 H0Z" fill="#b0b0b0" />
          </svg>
          <SectorName>通信服务</SectorName>
          <SectorChange>-1.37%</SectorChange>
        </Sector>
        <NavAction>
          <DocIcon />
          <ActionLabel>下单</ActionLabel>
        </NavAction>
        <NavAction>
          <CaseIcon />
          <ActionLabel>诊股</ActionLabel>
        </NavAction>
        <NavAction>
          <RemoveIcon />
          <ActionLabel>删自选</ActionLabel>
        </NavAction>
        <NavAction>
          <FuncIcon />
          <ActionLabel>功能</ActionLabel>
          <RedDot $size={21} $left={142} $top={29} />
        </NavAction>
        <HomeBar />
      </BottomBar>
    </Page>
  );
}
